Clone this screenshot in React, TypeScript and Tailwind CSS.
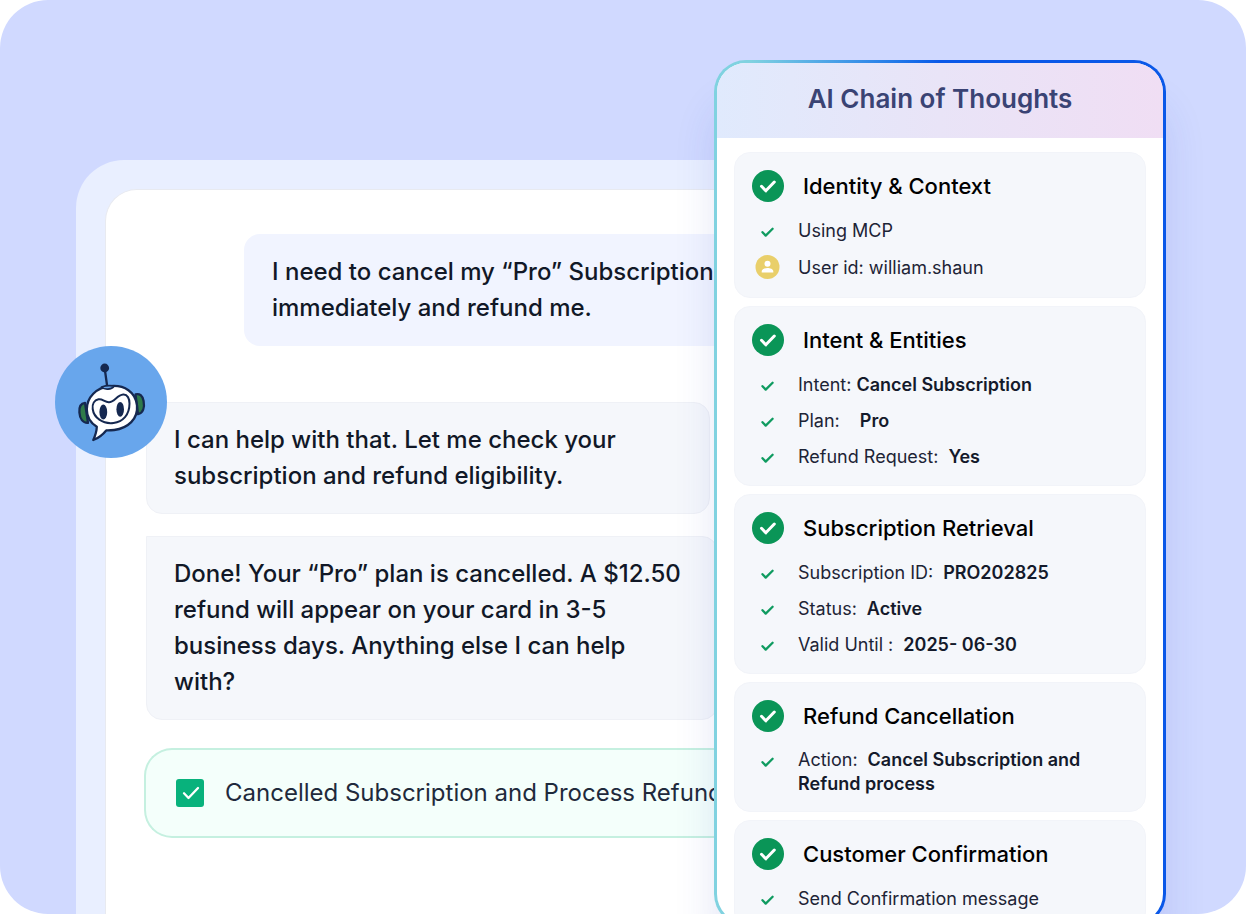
import React from 'react';

interface Detail {
    icon: 'check' | 'user';
    label: string;
    value?: string;
    gap?: string;
}

interface Step {
    title: string;
    details: Detail[];
}

const STEPS: Step[] = [
    {
        title: 'Identity & Context',
        details: [
            { icon: 'check', label: 'Using MCP' },
            { icon: 'user', label: 'User id: william.shaun' },
        ],
    },
    {
        title: 'Intent & Entities',
        details: [
            { icon: 'check', label: 'Intent:', value: 'Cancel Subscription', gap: 'mr-[5px]' },
            { icon: 'check', label: 'Plan:', value: 'Pro', gap: 'mr-5' },
            { icon: 'check', label: 'Refund Request:', value: 'Yes', gap: 'mr-2.5' },
        ],
    },
    {
        title: 'Subscription Retrieval',
        details: [
            { icon: 'check', label: 'Subscription ID:', value: 'PRO202825', gap: 'mr-2.5' },
            { icon: 'check', label: 'Status:', value: 'Active', gap: 'mr-2.5' },
            { icon: 'check', label: 'Valid Until :', value: '2025- 06-30', gap: 'mr-2.5' },
        ],
    },
    {
        title: 'Refund Cancellation',
        details: [
            { icon: 'check', label: 'Action:', value: 'Cancel Subscription and Refund process', gap: 'mr-2.5' },
        ],
    },
    {
        title: 'Customer Confirmation',
        details: [{ icon: 'check', label: 'Send Confirmation message' }],
    },
];

const StepBadge: React.FC = () => (
    <svg className="h-8 w-8 shrink-0" viewBox="0 0 32 32" fill="none">
        <circle cx="16" cy="16" r="16" fill="#0a9557" />
        <path d="M9.5 16.3l4.3 4.5L22.300 12" stroke="white" strokeWidth="3" strokeLinecap="round" strokeLinejoin="round" />
    </svg>
);

const SmallCheck: React.FC = () => (
    <svg className="h-7 w-8" viewBox="0 0 32 28" fill="none">
        <path d="M10.500 14.200l3.200 3.400 6.900-6.800" stroke="#0f9b60" strokeWidth="2.300" strokeLinecap="round" strokeLinejoin="round" />
    </svg>
);

const UserBadge: React.FC = () => (
    <svg className="h-7 w-8" viewBox="0 0 32 28">
        <circle cx="15.500" cy="13" r="12" fill="#e9cf6a" />
        <circle cx="15.500" cy="9.800" r="3" fill="white" />
        <path d="M9.700 18.500v-1c0-2.300 3.300-3.400 5.800-3.400s5.800 1.100 5.800 3.400v1z" fill="white" />
    </svg>
);

const RobotAvatar: React.FC = () => (
    <svg className="h-28 w-28" viewBox="0 0 112 112" fill="none" role="img" aria-label="Assistant">
        <circle cx="56" cy="56" r="56" fill="#68a6ec" />
        <g stroke="#152850" strokeWidth="2.300" strokeLinejoin="round" strokeLinecap="round">
            <path d="M49.700 22.500L52 39" />
            <path d="M30 56.800c-4 .4-6 4.200-5.600 9.700.4 6.300 3.400 10.700 8.600 10.300z" fill="#2f7a4a" />
            <path d="M80.500 48.300c4.200-1 7 1.200 8.100 6.700 1.200 6.500-.5 12-5.600 13.200z" fill="#2f7a4a" />
            <path
                d="M41.800 80.800C35.500 76.800 31.800 71 31.800 63.500c0-12.500 9.700-21.700 22.700-23.300 15-1.800 26.300 6 27.500 19.300 1.200 13.500-9 22.800-22.800 24.500-3.200.4-5.700.5-8 .4-3.500 4.300-7.700 7.600-12.900 9.600 2-4.500 3.400-9 3.500-13.200z"
                fill="white"
            />
            <path
                d="M43.500 53.300c3.700-.8 6 2.600 10.300 2.900 5.200.3 8.200-7 14.400-7.600 4.300-.3 6.300 4 6.300 8.900C74.500 69 67.800 75.800 58.500 77 47.500 78.300 38.800 71.500 37.700 63c-.6-5 1.600-8.800 5.800-9.700z"
                strokeWidth="2"
            />
            <path d="M46.500 41c3 3.200 10 2.900 12.700-.9-4.200-.7-8.700-.4-12.700.9z" fill="#68a6ec" strokeWidth="1.800" />
        </g>
        <circle cx="49.700" cy="22" r="4.400" fill="#152850" />
        <ellipse cx="48.300" cy="66" rx="3.900" ry="7.400" fill="#152850" />
        <ellipse cx="65.200" cy="63.300" rx="3.800" ry="7.400" fill="#152850" />
    </svg>
);

const StepCard: React.FC<{ step: Step }> = ({ step }) => (
    <section className="shrink-0 rounded-2xl border border-[#f2f4f9] bg-[#f5f7fb] px-[17px] pt-[17px] pb-[15px]">
        <div className="flex items-center gap-[19px]">
            <StepBadge />
            <h3 className="text-[22px] leading-8 font-medium text-black">{step.title}</h3>
        </div>
        <ul className="mt-4 space-y-2.5">
            {step.details.map((detail) => (
                <li key={detail.label} className={detail.icon === 'user' ? 'flex min-h-7 items-center gap-3.5' : 'flex min-h-[26px] items-center gap-3.5'}>
                    <span className="h-[26px] w-8 shrink-0 self-start">
                        {detail.icon === 'user' ? <UserBadge /> : <SmallCheck />}
                    </span>
                    <p className="text-lg leading-6 text-[#1d2436]">
                        <span className={detail.gap}>{detail.label}</span>
                        {detail.value && <strong className="font-semibold text-[#141a2b]">{detail.value}</strong>}
                    </p>
                </li>
            ))}
        </ul>
    </section>
);

const ChatWindow: React.FC = () => (
    <section className="mt-40 ml-[76px] min-w-0 flex-1 rounded-tl-[48px] bg-[#e9efff] pt-[29px] pl-[29px]">
        <div className="flex h-full flex-col rounded-tl-[32px] border-t border-l border-[#e8eaf0] bg-white pt-11 pl-10 text-2xl leading-9 font-medium text-[#111827]">
            <div className="ml-[98px] rounded-2xl bg-[#f1f4ff] px-7 py-5">
                <p className="w-[460px]">I need to cancel my “Pro” Subscription immediately and refund me.</p>
            </div>
            <div className="relative mt-14 w-[564px] rounded-2xl border border-[#eff1f6] bg-[#f5f7fb] px-[27px] py-[19px]">
                <div className="absolute -top-[57px] -left-[92px]">
                    <RobotAvatar />
                </div>
                <p className="w-[480px]">I can help with that. Let me check your subscription and refund eligibility.</p>
            </div>
            <div className="mt-[22px] w-[572px] rounded-2xl rounded-tl-none border border-[#eff1f6] bg-[#f5f7fb] px-[27px] py-[19px]">
                <p className="w-[510px]">
                    Done! Your “Pro” plan is cancelled. A $12.50 refund will appear on your card in 3-5 business days. Anything else I can help with?
                </p>
            </div>
            <label className="mt-7 -ml-0.5 flex h-[90px] shrink-0 items-center gap-[21px] rounded-l-[28px] border-2 border-r-0 border-[#c5f0e0] bg-[#f4fffb] pl-[30px] font-normal whitespace-nowrap text-[#1f2a3c]">
                <span className="grid h-7 w-7 shrink-0">
                    <input type="checkbox" defaultChecked className="col-start-1 row-start-1 h-7 w-7 appearance-none rounded-[3px] bg-[#08b27c]" />
                    <svg className="pointer-events-none col-start-1 row-start-1 h-7 w-7" viewBox="0 0 28 28" fill="none">
                        <path d="M8 14.300l4.500 4.700L22 9" stroke="white" strokeWidth="2.300" strokeLinecap="round" strokeLinejoin="round" />
                    </svg>
                </span>
                Cancelled Subscription and Process Refund
            </label>
        </div>
    </section>
);

const ThoughtsPanel: React.FC = () => (
    <aside className="z-10 mt-[60px] mr-20 -mb-3 -ml-12 flex w-[452px] shrink-0 rounded-[32px] bg-linear-to-r from-[#80d2e0] from-8% to-[#0a58e8] to-50% p-[3px] shadow-[0_44px_40px_rgba(50,70,190,0.13)]">
        <div className="flex w-full flex-col overflow-hidden rounded-[29px] bg-white">
            <h2 className="h-[75px] shrink-0 bg-linear-to-r from-[#e0eafd] via-[#e9e4f7] to-[#f0def4] text-center text-[26px] leading-[72px] font-semibold text-[#3a4374]">
                AI Chain of Thoughts
            </h2>
            <div className="flex flex-col gap-2 px-[17px] pt-3.5">
                {STEPS.map((step) => (
                    <StepCard key={step.title} step={step} />
                ))}
            </div>
        </div>
    </aside>
);

const App: React.FC = () => {
    return (
        <div className="bg-white font-['Inter',sans-serif]">
            <main className="flex h-screen overflow-hidden rounded-[48px] bg-[#d0d9ff]">
                <ChatWindow />
                <ThoughtsPanel />
            </main>
        </div>
    );
};

export default App;
